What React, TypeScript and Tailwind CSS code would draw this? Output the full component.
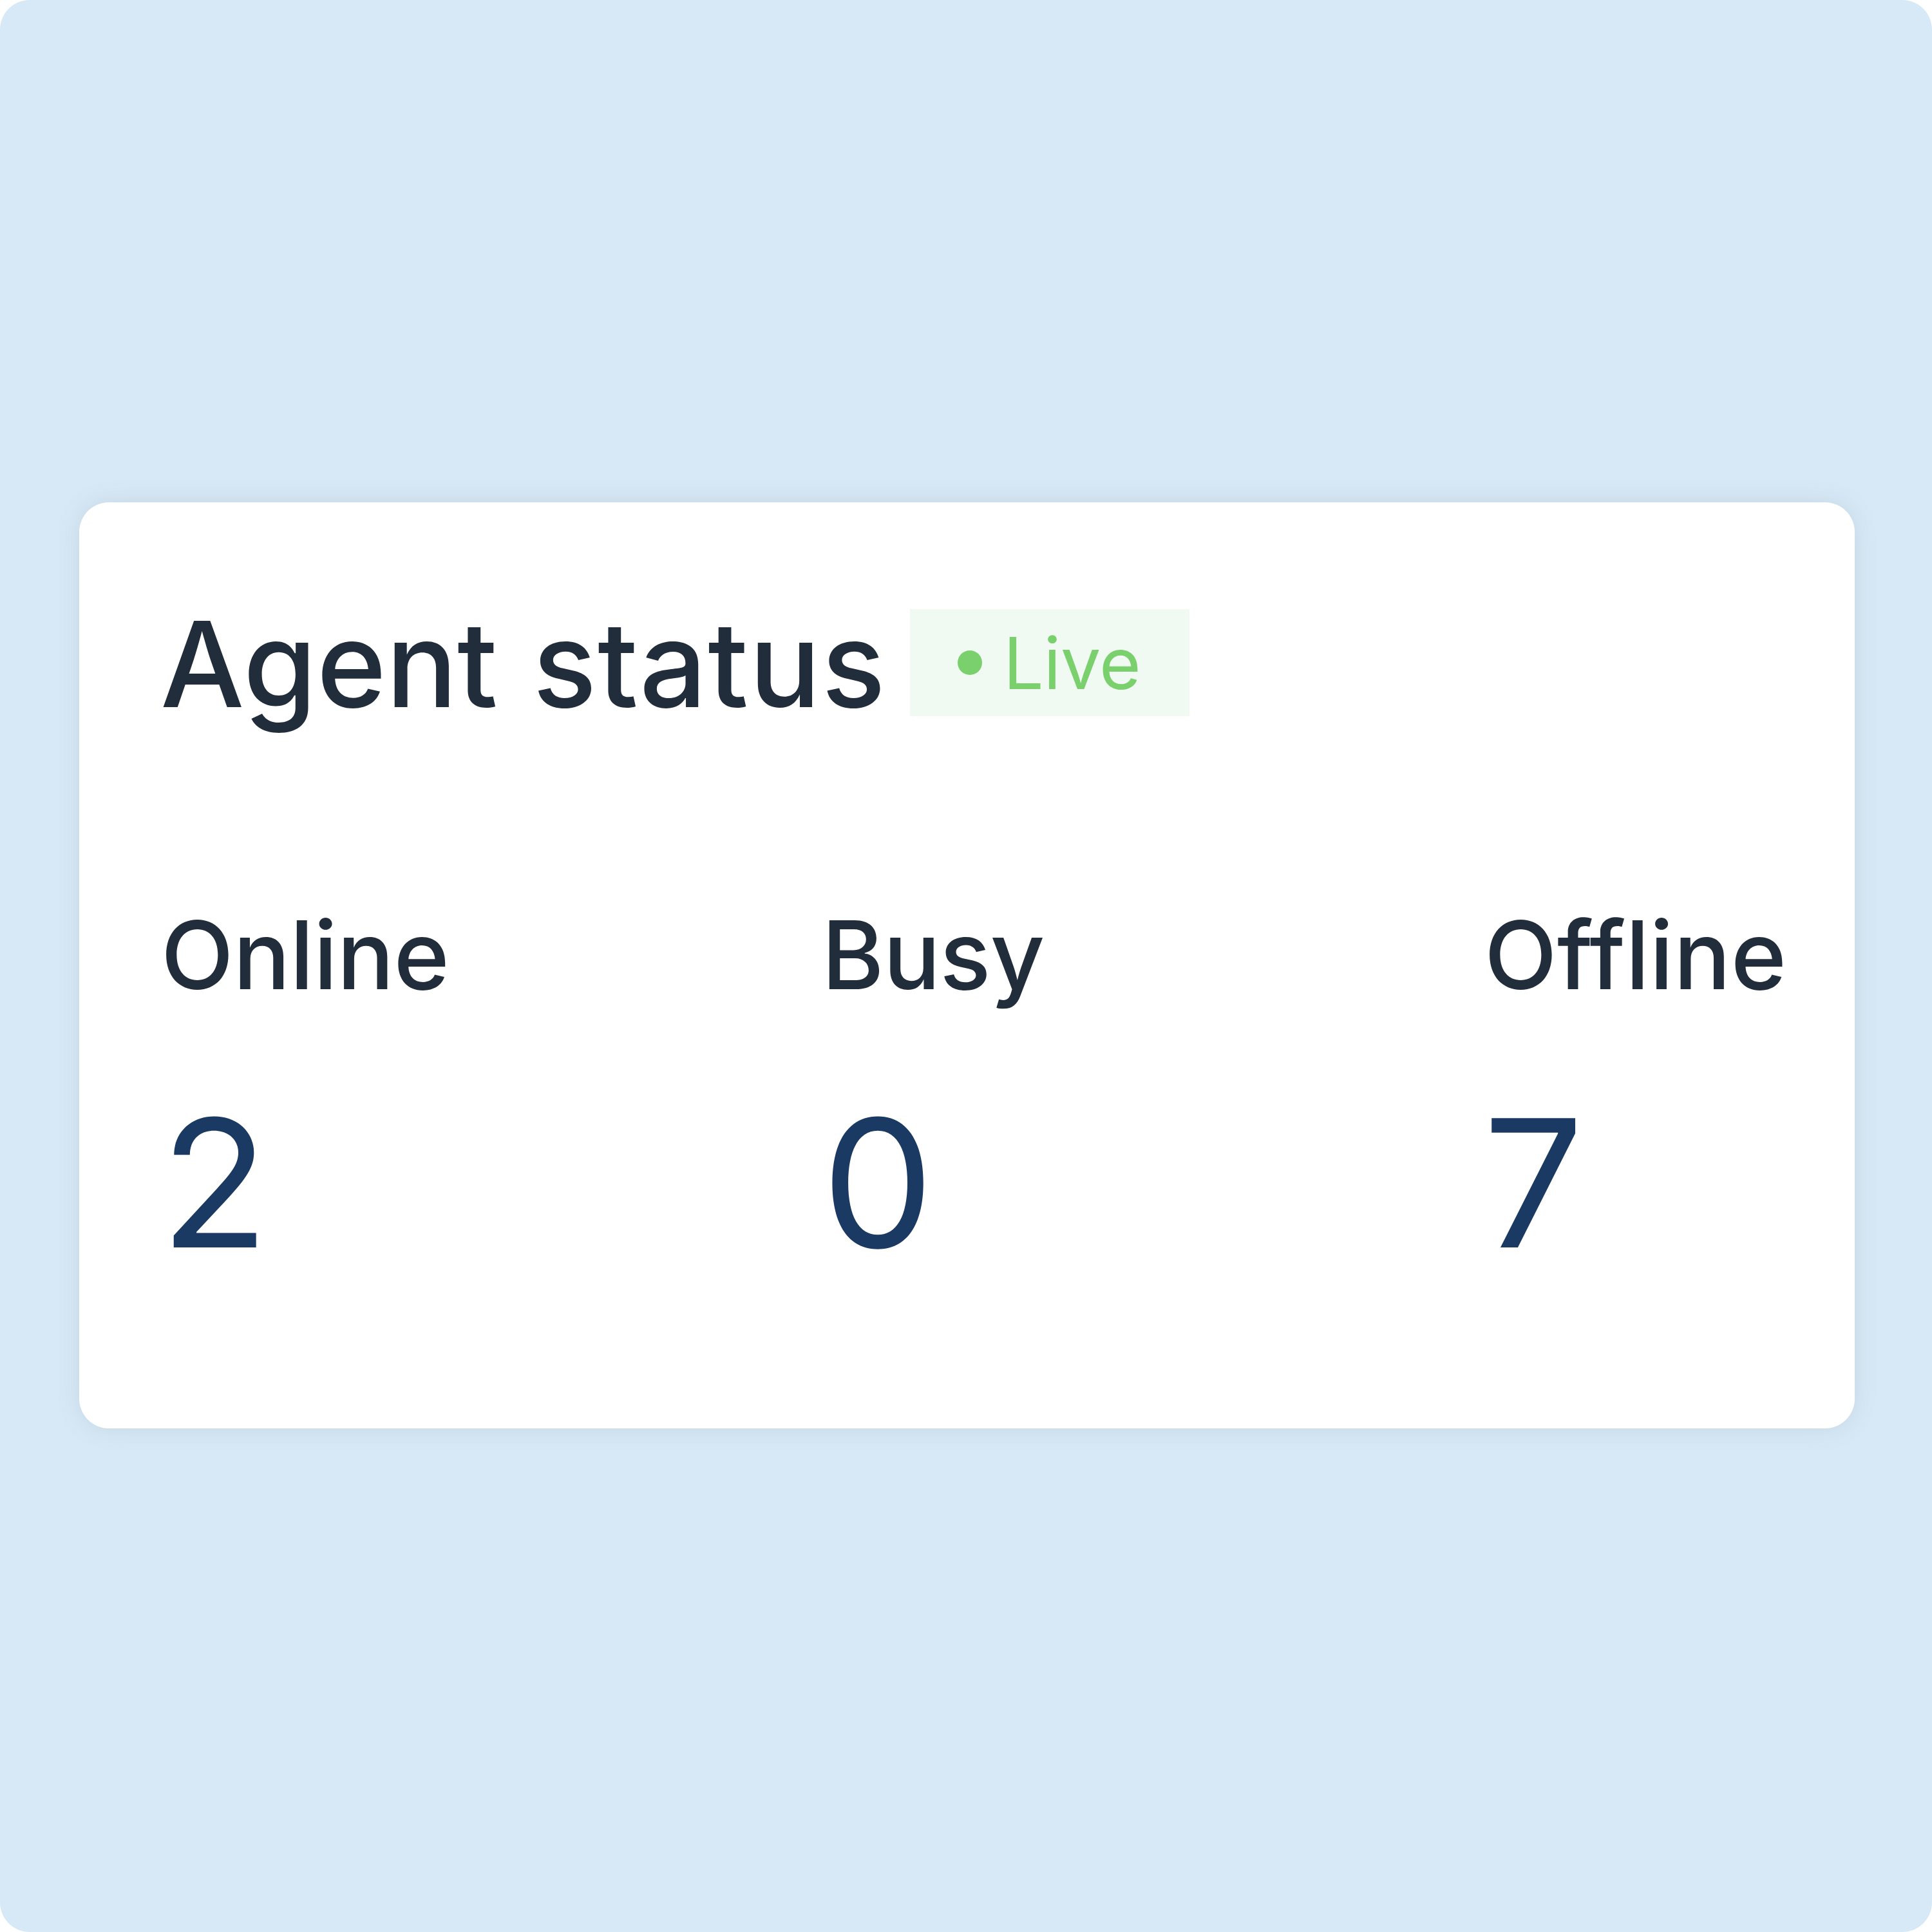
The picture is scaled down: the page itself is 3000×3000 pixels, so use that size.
import clsx from "clsx";

type Stat = {
  label: string;
  value: number;
  labelClass: string;
};

const stats: Stat[] = [
  { label: "Online", value: 2, labelClass: "pl-[1px] tracking-[-0.4px]" },
  { label: "Busy", value: 0, labelClass: "tracking-[-0.8px]" },
  { label: "Offline", value: 7, labelClass: "pl-[2px] tracking-[0.3px]" },
];

function LiveBadge() {
  return (
    <div className="mt-[25px] flex h-[166px] w-[434px] items-center bg-[#f0f9f2] pl-[74px] text-[#7ad06d]">
      <span className="size-[38px] rounded-full bg-[#7ad06d]" />
      <span className="ml-[33px] pt-[2px] text-[111px] leading-[134px] tracking-[-0.3px]">Live</span>
    </div>
  );
}

function StatColumn({ label, value, labelClass }: Stat) {
  return (
    <div className="w-[1027px] shrink-0 last:w-auto">
      <div className={clsx("text-[147px] leading-[176px] font-medium text-[#212d3b]", labelClass)}>
        {label}
      </div>
      <div className="mt-[100px] text-[276px] leading-[332px] text-[#1b3a63]">{value}</div>
    </div>
  );
}

export default function App() {
  return (
    <div className="h-[3000px] w-[3000px] bg-white font-['Inter','Liberation_Sans',sans-serif] [font-optical-sizing:none]">
      <div className="flex h-full w-full flex-col rounded-[46px] bg-[#d7e9f7] pt-[780px] pl-[123px]">
        <div className="h-[1438px] w-[2757px] rounded-[46px] bg-white pt-[141px] pl-[126px] shadow-[0_0_36px_rgba(100,105,110,0.15)]">
          <div className="flex items-start">
            <h1 className="w-[1164px] text-[184px] leading-[220px] font-medium whitespace-nowrap text-[#212d3b]">
              <span className="tracking-[-0.2px] [word-spacing:6px]">Agent </span>
              <span className="tracking-[1.6px]">status</span>
            </h1>
            <LiveBadge />
          </div>
          <div className="mt-[254px] flex">
            {stats.map((stat) => (
              <StatColumn key={stat.label} {...stat} />
            ))}
          </div>
        </div>
      </div>
    </div>
  );
}
